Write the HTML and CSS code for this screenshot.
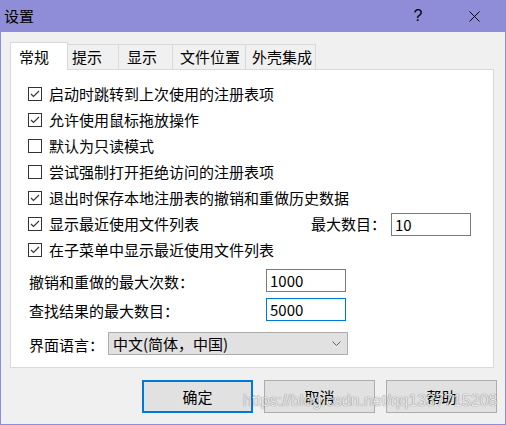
FILE: index.html
```html
<!DOCTYPE html>
<html lang="zh-CN">
  <head>
    <meta charset="UTF-8" />
    <meta name="viewport" content="width=device-width, initial-scale=1.0" />
    <title>设置</title>
    <link rel="stylesheet" href="styles.css">
  </head>
  <body>
    <div class="window">
      <!-- Title bar -->
      <div class="titlebar">
        <span class="title">设置</span>
        <span class="title-btn help">?</span>
        <span class="title-btn close">
          <svg width="11" height="11" viewBox="0 0 11 11">
            <path d="M0.5 0.5 L10.5 10.5 M10.5 0.5 L0.5 10.5" stroke="#000" stroke-width="1" fill="none" />
          </svg>
        </span>
      </div>

      <!-- Tabs -->
      <div class="tabs">
        <div class="tab active">常规</div>
        <div class="tab tab-hint">提示</div>
        <div class="tab tab-show">显示</div>
        <div class="tab tab-files">文件位置</div>
        <div class="tab tab-shell">外壳集成</div>
      </div>

      <div class="panel">
        <div class="check-row">
          <svg class="box" viewBox="0 0 14 14"><rect x="0.5" y="0.5" width="13" height="13" /><polyline points="3,7 5.5,9.5 11,4" /></svg>
          启动时跳转到上次使用的注册表项
        </div>
        <div class="check-row">
          <svg class="box" viewBox="0 0 14 14"><rect x="0.5" y="0.5" width="13" height="13" /><polyline points="3,7 5.5,9.5 11,4" /></svg>
          允许使用鼠标拖放操作
        </div>
        <div class="check-row">
          <svg class="box" viewBox="0 0 14 14"><rect x="0.5" y="0.5" width="13" height="13" /></svg>
          默认为只读模式
        </div>
        <div class="check-row">
          <svg class="box" viewBox="0 0 14 14"><rect x="0.5" y="0.5" width="13" height="13" /></svg>
          尝试强制打开拒绝访问的注册表项
        </div>
        <div class="check-row">
          <svg class="box" viewBox="0 0 14 14"><rect x="0.5" y="0.5" width="13" height="13" /><polyline points="3,7 5.5,9.5 11,4" /></svg>
          退出时保存本地注册表的撤销和重做历史数据
        </div>
        <div class="check-row">
          <svg class="box" viewBox="0 0 14 14"><rect x="0.5" y="0.5" width="13" height="13" /><polyline points="3,7 5.5,9.5 11,4" /></svg>
          显示最近使用文件列表
          <span class="side-label">最大数目：</span>
          <input class="field side-field" type="text" value="10" />
        </div>
        <div class="check-row">
          <svg class="box" viewBox="0 0 14 14"><rect x="0.5" y="0.5" width="13" height="13" /><polyline points="3,7 5.5,9.5 11,4" /></svg>
          在子菜单中显示最近使用文件列表
        </div>

        <div class="num-row first">
          <span class="num-label">撤销和重做的最大次数：</span>
          <input class="field" type="text" value="1000" />
        </div>
        <div class="num-row">
          <span class="num-label">查找结果的最大数目：</span>
          <input class="field focused" type="text" value="5000" />
        </div>

        <div class="lang-row">
          <span class="lang-label">界面语言：</span>
          <div class="select">
            <span>中文(简体，中国)</span>
            <svg width="9" height="5" viewBox="0 0 9 5">
              <polyline points="0.5,0.5 4.5,4.5 8.5,0.5" fill="none" stroke="#606060" stroke-width="1" />
            </svg>
          </div>
        </div>
      </div>

      <!-- Dialog buttons -->
      <div class="buttons">
        <button class="btn default">确定</button>
        <button class="btn">取消</button>
        <button class="btn">帮助</button>
      </div>

      <div class="watermark">https://blog.csdn.net/qq1337715208</div>
    </div>
  </body>
</html>
```

FILE: styles.css
```css
body {
  margin: 0;
  font-family: "Noto Sans CJK SC", "Noto Sans", sans-serif;
  font-size: 15px;
  line-height: 20px;
  color: #000;
  background: #f0f0f0;
}
.window {
  position: relative;
  width: 506px;
  height: 425px;
  box-sizing: border-box;
  border: 1px solid #8f8dd8;
  border-top: 0;
  background: #f0f0f0;
}
.titlebar {
  display: flex;
  align-items: center;
  height: 32px;
  padding-left: 3px;
  background: #8f8dd8;
}
.title {
  flex: 1;
}
.title-btn {
  display: flex;
  justify-content: center;
  align-items: center;
  width: 46px;
  height: 32px;
}
.help {
  margin-right: 10px;
  font-family: "Liberation Sans", sans-serif;
  font-size: 16px;
}
.close {
  margin-right: 8px;
}

/* tabs */
.tabs {
  display: flex;
  align-items: flex-end;
  height: 27px;
  margin: 10px 0 0 9px;
}
.tab {
  box-sizing: border-box;
  height: 25px;
  padding-left: 5px;
  line-height: 24px;
  border: 1px solid #d9d9d9;
  border-bottom: 0;
  border-left: 0;
  background: #f0f0f0;
}
.tab.active {
  position: relative;
  z-index: 1;
  width: 58px;
  height: 28px;
  margin-bottom: -1px;
  padding-left: 8px;
  line-height: 28px;
  border-left: 1px solid #d9d9d9;
  background: #fff;
}
.tab-hint {
  width: 51px;
  padding-left: 4px;
}
.tab-show {
  width: 54px;
  padding-left: 8px;
}
.tab-files {
  width: 73px;
  padding-left: 7px;
}
.tab-shell {
  width: 70px;
  padding-left: 6px;
}

.panel {
  box-sizing: border-box;
  width: 484px;
  height: 299px;
  margin-left: 9px;
  padding: 11px 0 0 17px;
  border: 1px solid #d9d9d9;
  background: #fff;
}
.check-row {
  display: flex;
  align-items: center;
  height: 26px;
}
.box {
  width: 14px;
  height: 14px;
  margin-right: 7px;
  flex-shrink: 0;
}
.box rect {
  fill: #fff;
  stroke: #333;
  stroke-width: 1;
}
.box polyline {
  fill: none;
  stroke: #333;
  stroke-width: 1.1;
}
.side-label {
  margin-left: auto;
  margin-right: 5px;
}
.side-field {
  margin-right: 22px;
}
.field {
  box-sizing: border-box;
  width: 80px;
  height: 23px;
  padding: 0 3px;
  font-family: "Noto Sans CJK SC", sans-serif;
  font-size: 15px;
  color: #000;
  border: 1px solid #7a7a7a;
  outline: none;
  background: #fff;
}
.field.focused {
  border-color: #0078d7;
}
.num-row {
  display: grid;
  grid-template-columns: 237px 80px;
  align-items: center;
  margin-top: 5px;
  padding-left: 1px;
}
.num-label {
  padding-top: 4px;
}
.lang-row {
  display: grid;
  grid-template-columns: 79px 240px;
  align-items: center;
  margin-top: 11px;
  padding-left: 1px;
}
.lang-label {
  padding-top: 3px;
}
.select {
  box-sizing: border-box;
  display: flex;
  align-items: center;
  justify-content: space-between;
  height: 23px;
  padding: 0 6px 0 4px;
  border: 1px solid #adadad;
  background: #e1e1e1;
}

/* bottom buttons */
.buttons {
  display: flex;
  justify-content: flex-end;
  gap: 11px;
  margin: 12px 8px 0 0;
}
.btn {
  box-sizing: border-box;
  width: 111px;
  height: 33px;
  padding: 0;
  font-family: "Noto Sans CJK SC", sans-serif;
  font-size: 15px;
  color: #000;
  border: 1px solid #adadad;
  background: #e1e1e1;
}
.btn.default {
  border: 2px solid #0078d7;
}

.watermark {
  position: absolute;
  left: 242px;
  top: 391px;
  font-family: "Liberation Sans", Arial, sans-serif;
  font-size: 16px;
  line-height: 20px;
  color: rgba(255, 255, 255, 0.85);
  text-shadow: 0 0 1px rgba(0, 0, 0, 0.35), 0 0 1px rgba(0, 0, 0, 0.35);
}
```
